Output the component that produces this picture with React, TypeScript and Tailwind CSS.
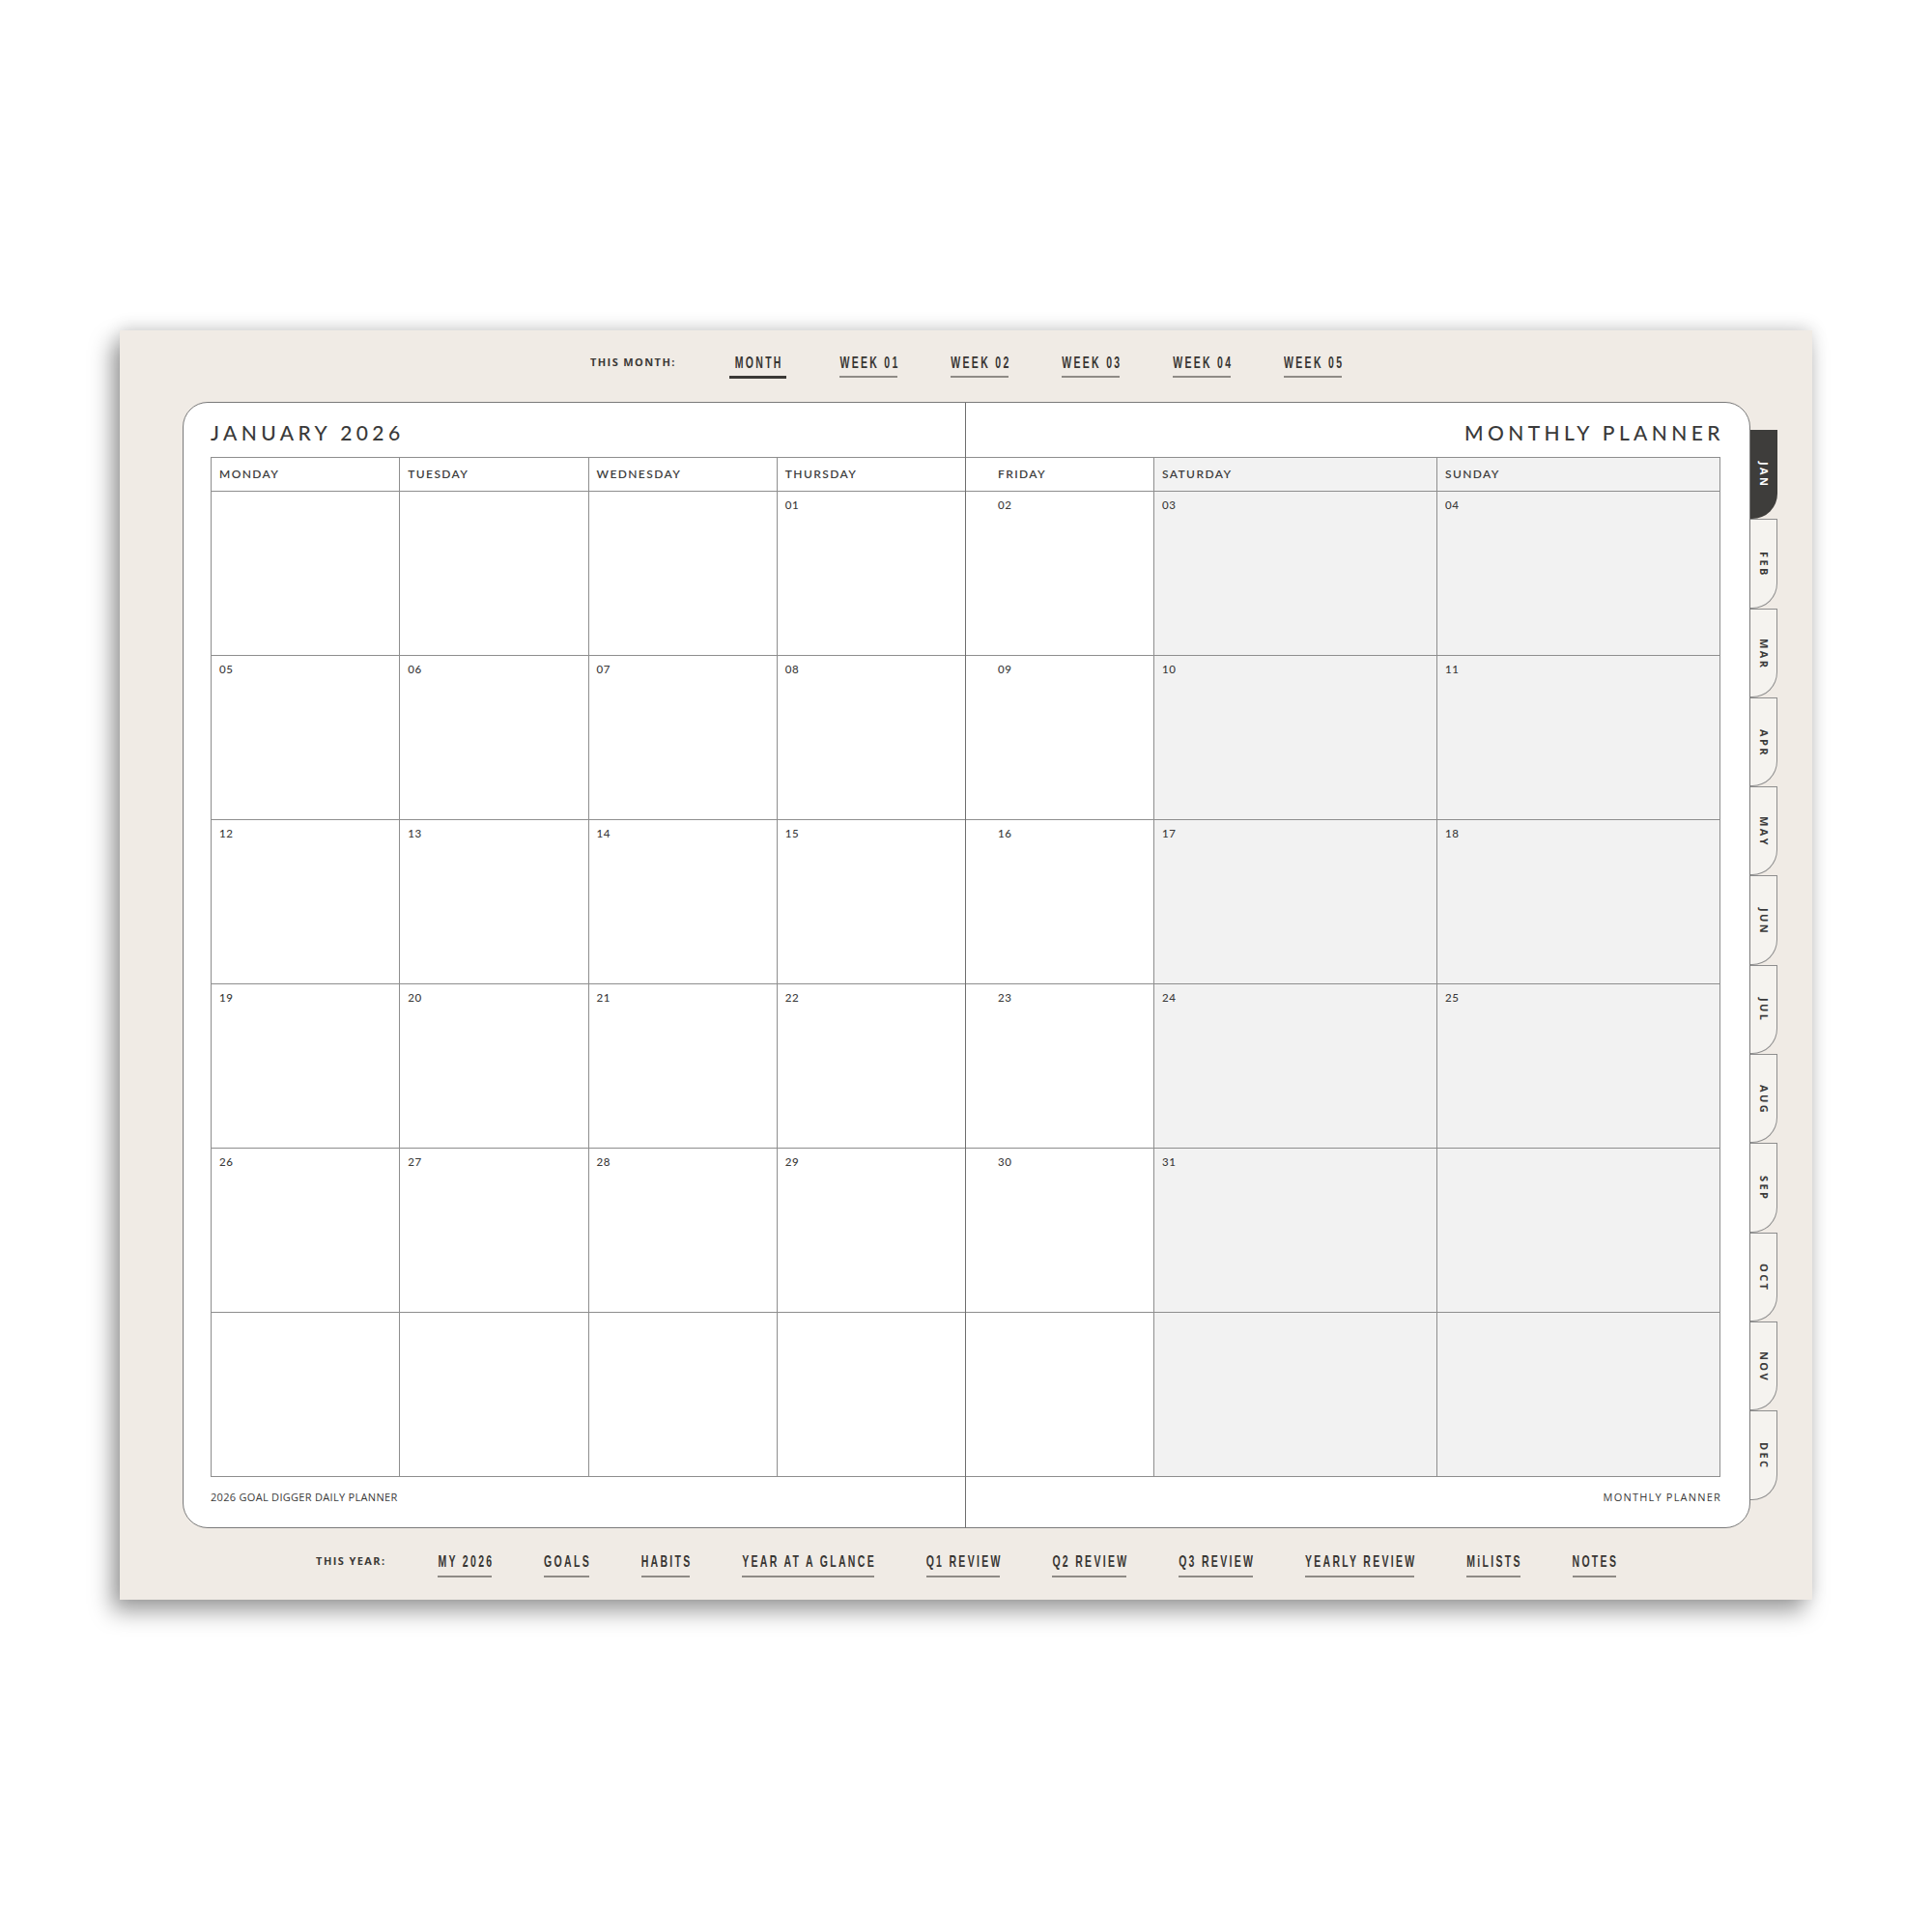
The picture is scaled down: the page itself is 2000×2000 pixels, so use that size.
import React from "react";

const weeks: string[][] = [
  ["", "", "", "01", "02", "03", "04"],
  ["05", "06", "07", "08", "09", "10", "11"],
  ["12", "13", "14", "15", "16", "17", "18"],
  ["19", "20", "21", "22", "23", "24", "25"],
  ["26", "27", "28", "29", "30", "31", ""],
  ["", "", "", "", "", "", ""],
];

const dayNames = ["MONDAY", "TUESDAY", "WEDNESDAY", "THURSDAY", "FRIDAY", "SATURDAY", "SUNDAY"];

const bodyFont = "font-['Lato','Open_Sans',sans-serif]";

function NavItem({ label, active, bottom }: { label: string; active?: boolean; bottom?: boolean }) {
  return (
    <div className="flex flex-col items-center">
      <div className={`font-['Liberation_Sans',Arial,sans-serif] font-bold text-[10.5px] leading-[12px] tracking-[2.3px] mr-[-2.3px] scale-y-[1.62] text-[#383633] whitespace-nowrap ${active ? "px-[6px]" : ""}`}>
        {label}
      </div>
      <div className={`${bottom ? "mt-[9px]" : "mt-[8px]"} self-stretch ${active ? "h-[3px] bg-[#3b3936]" : "h-[2px] bg-[#8f8b86]"}`} />
    </div>
  );
}

function Label({ text }: { text: string }) {
  return (
    <div className="font-['Open_Sans',sans-serif] font-bold text-[11px] leading-[12px] tracking-[1.4px] text-[#3b3936] whitespace-nowrap">
      {text}
    </div>
  );
}

function Cell({ text, col, header }: { text: string; col: number; header?: boolean }) {
  const weekend = col >= 5;
  const pl = col === 4 ? "pl-[33px]" : "pl-[8px]";
  if (header) {
    return (
      <div className={`${weekend ? "bg-[#f2f2f2]" : "bg-white"} ${pl} flex items-center`}>
        <div className={`${bodyFont} font-semibold text-[12px] leading-[14px] tracking-[1.4px] text-[#3e3e3e]`}>{text}</div>
      </div>
    );
  }
  return (
    <div className={`${weekend ? "bg-[#f2f2f2]" : "bg-white"} ${pl} pt-[7px]`}>
      <div className={`${bodyFont} font-medium text-[11.5px] leading-[14px] tracking-[0.5px] text-[#3a3a3a]`}>{text}</div>
    </div>
  );
}

function LeftPage() {
  const cols = [0, 1, 2, 3];
  return (
    <div className="w-[810px] shrink-0 h-full border-r border-[#6e6e6e] pl-[28px] flex flex-col">
      <div className="h-[56px] pt-[20px]">
        <div className={`${bodyFont} font-medium text-[21px] leading-[21px] tracking-[0.21em] text-[#3a3a3a]`}>JANUARY 2026</div>
      </div>
      <div className="grid grid-cols-[repeat(4,minmax(0,1fr))] grid-rows-[34px_repeat(6,169px)] gap-px bg-[#8e8e8e] border-l border-t border-b border-[#8e8e8e]">
        {cols.map((c) => (
          <Cell key={"h" + c} text={dayNames[c]} col={c} header />
        ))}
        {weeks.map((w, r) => cols.map((c) => <Cell key={r + "-" + c} text={w[c]} col={c} />))}
      </div>
      <div className="pt-[14px] font-['Open_Sans',sans-serif] text-[11px] leading-[14px] tracking-[0.3px] text-[#3a3a3a]">
        2026 GOAL DIGGER DAILY PLANNER
      </div>
    </div>
  );
}

function RightPage() {
  const cols = [4, 5, 6];
  return (
    <div className="flex-1 min-w-0 h-full pr-[30px] flex flex-col">
      <div className="h-[56px] pt-[20px] flex justify-end">
        <div className={`${bodyFont} font-medium text-[21px] leading-[21px] tracking-[0.21em] mr-[-4px] text-[#3a3a3a]`}>MONTHLY PLANNER</div>
      </div>
      <div className="grid grid-cols-[194px_292px_minmax(0,1fr)] grid-rows-[34px_repeat(6,169px)] gap-px bg-[#8e8e8e] border-r border-t border-b border-[#8e8e8e]">
        {cols.map((c) => (
          <Cell key={"h" + c} text={dayNames[c]} col={c} header />
        ))}
        {weeks.map((w, r) => cols.map((c) => <Cell key={r + "-" + c} text={w[c]} col={c} />))}
      </div>
      <div className="pt-[14px] flex justify-end">
        <div className="font-['Open_Sans',sans-serif] text-[11px] leading-[14px] tracking-[1.2px] mr-[-1px] text-[#3a3a3a]">MONTHLY PLANNER</div>
      </div>
    </div>
  );
}

const months = ["JAN", "FEB", "MAR", "APR", "MAY", "JUN", "JUL", "AUG", "SEP", "OCT", "NOV", "DEC"];

function Tabs() {
  return (
    <div className="flex flex-col pt-[29px]">
      {months.map((m, i) => (
        <div
          key={m}
          className={`w-[28px] h-[92.3px] rounded-br-[26px] flex items-center justify-center ${
            i === 0 ? "bg-[#3e3d3b] text-white" : "bg-[#f5f3ef] text-[#3a3a3a] border-t border-r border-b border-[#8e8e8e]"
          }`}
        >
          <div className="[writing-mode:vertical-rl] font-['Open_Sans',sans-serif] font-bold text-[11px] leading-[12px] tracking-[2.4px] mb-[-2px]">{m}</div>
        </div>
      ))}
    </div>
  );
}

export default function App() {
  const weekItems = ["WEEK 01", "WEEK 02", "WEEK 03", "WEEK 04", "WEEK 05"];
  const yearItems = ["MY 2026", "GOALS", "HABITS", "YEAR AT A GLANCE", "Q1 REVIEW", "Q2 REVIEW", "Q3 REVIEW", "YEARLY REVIEW", "MiLISTS", "NOTES"];
  return (
    <div className="w-[2000px] h-[2000px] bg-white pt-[342px] pl-[124px]">
      <div className="w-[1752px] h-[1314px] bg-[#f0ebe5] shadow-[-8px_12px_22px_rgba(0,0,0,0.38),0_-4px_16px_rgba(0,0,0,0.12)] flex flex-col">
        <div className="h-[74px] pt-[27px] flex justify-center items-start gap-[55px]">
          <Label text="THIS MONTH:" />
          <NavItem label="MONTH" active />
          {weekItems.map((w) => (
            <NavItem key={w} label={w} />
          ))}
        </div>
        <div className="h-[1166px] flex pl-[65px]">
          <div className="w-[1623px] h-full bg-white rounded-[26px] border border-[#7a7a7a] flex overflow-hidden">
            <LeftPage />
            <RightPage />
          </div>
          <Tabs />
        </div>
        <div className="h-[74px] pt-[28px] flex justify-center items-start gap-[54px]">
          <Label text="THIS YEAR:" />
          {yearItems.map((y) => (
            <NavItem key={y} label={y} bottom />
          ))}
        </div>
      </div>
    </div>
  );
}
